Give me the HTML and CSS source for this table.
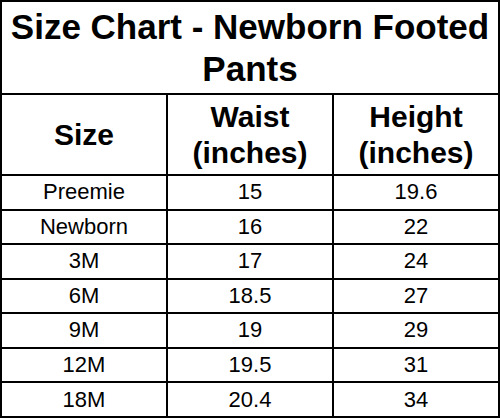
FILE: index.html
```html
<!DOCTYPE html>
<html lang="en">
<head>
<meta charset="utf-8">
<title>Size Chart - Newborn Footed Pants</title>
<link rel="stylesheet" href="styles.css">
</head>
<body>
<div class="chart" role="table">
  <div class="cell title" role="columnheader">Size Chart - Newborn Footed Pants</div>
  <div class="cell head" role="columnheader">Size</div>
  <div class="cell head" role="columnheader">Waist<br>(inches)</div>
  <div class="cell head" role="columnheader">Height<br>(inches)</div>

  <div class="cell">Preemie</div><div class="cell">15</div><div class="cell">19.6</div>
  <div class="cell">Newborn</div><div class="cell">16</div><div class="cell">22</div>
  <div class="cell">3M</div><div class="cell">17</div><div class="cell">24</div>
  <div class="cell">6M</div><div class="cell">18.5</div><div class="cell">27</div>
  <div class="cell">9M</div><div class="cell">19</div><div class="cell">29</div>
  <div class="cell">12M</div><div class="cell">19.5</div><div class="cell">31</div>
  <div class="cell">18M</div><div class="cell">20.4</div><div class="cell">34</div>
</div>
</body>
</html>
```

FILE: styles.css
```css
html, body {
  margin: 0;
  padding: 0;
  background: #fff;
}

.chart {
  box-sizing: border-box;
  width: 500px;
  height: 418px;
  display: grid;
  grid-template-columns: repeat(3, 1fr);
  grid-template-rows: 91px 79px repeat(7, 1fr);
  gap: 2px;
  padding: 2px;
  background: #000;
  font-family: "Liberation Sans", Arial, sans-serif;
  color: #000;
}

.cell {
  background: #fff;
  display: flex;
  align-items: center;
  justify-content: center;
  text-align: center;
  font-size: 22px;
  line-height: 1.2;
}

.title {
  grid-column: 1 / -1;
  font-size: 35px;
  font-weight: bold;
  line-height: 42px;
  padding: 0 8px;
}

.head {
  font-size: 30px;
  font-weight: bold;
  line-height: 36px;
}
```
